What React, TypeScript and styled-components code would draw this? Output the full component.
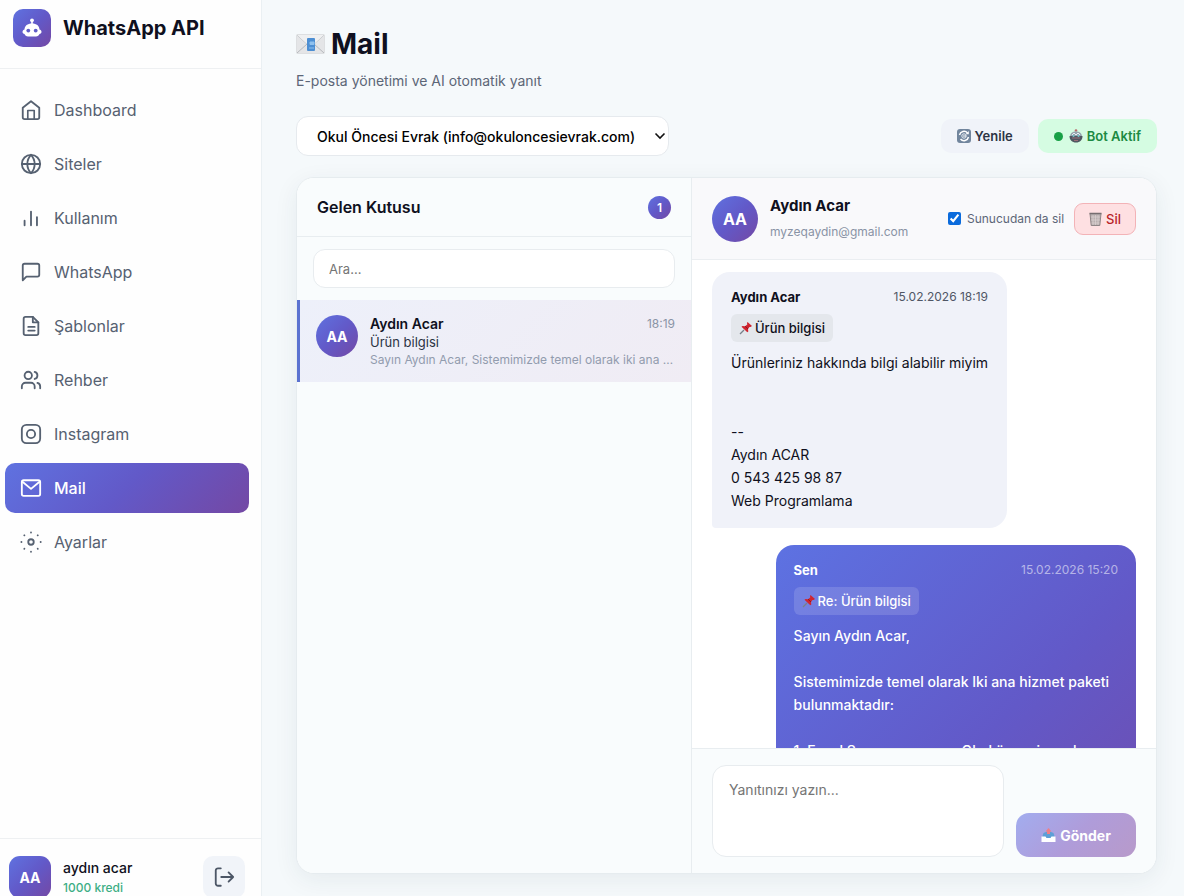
import React from "react";
import styled, { createGlobalStyle, css } from "styled-components";
import { Globe, Users } from "lucide-react";

const brand = "linear-gradient(135deg, #5f72e0 0%, #6259c8 50%, #7448a4 100%)";

const Global = createGlobalStyle`
  *, *::before, *::after { box-sizing: border-box; }
  body { margin: 0; font-family: Inter, "Liberation Sans", sans-serif; font-size: 14px; color: #0f1020; }
  button, input, textarea, select { font: inherit; color: inherit; }
  h1, h2, h3, p { margin: 0; }
`;

const Shell = styled.div`
  display: grid;
  grid-template-columns: 262px minmax(0, 1fr);
  height: 100vh;
  overflow: hidden;
  background: #f5f9fb;
`;

const Sidebar = styled.aside`
  display: flex;
  flex-direction: column;
  min-height: 0;
  background: #fefefe;
  border-right: 1px solid #eaf0f3;
`;

const Brand = styled.div`
  display: flex;
  align-items: center;
  gap: 12px;
  height: 69px;
  padding: 0 13px 12px;
  border-bottom: 1px solid #eef0f2;
  font-size: 20px;
  font-weight: 700;
`;

const Logo = styled.span`
  display: grid;
  place-items: center;
  width: 38px;
  height: 38px;
  border-radius: 10px;
  background: ${brand};
`;

const Nav = styled.nav`
  flex: 1;
  display: flex;
  flex-direction: column;
  gap: 4px;
  padding: 16px 12px 0 5px;
`;

const NavLink = styled.a<{ $active?: boolean }>`
  display: flex;
  align-items: center;
  gap: 12px;
  height: 50px;
  padding: 0 15px;
  border-radius: 10px;
  font-size: 16px;
  text-decoration: none;
  color: #566171;
  ${(p) => p.$active && css`
    color: #fff;
    font-weight: 500;
    background: ${brand};
  `}
`;

const Account = styled.div`
  display: flex;
  align-items: flex-start;
  gap: 12px;
  height: 58px;
  padding: 17px 16px 0 9px;
  border-top: 1px solid #eef0f2;
`;

const Avatar = styled.span<{ $size: number; $square?: boolean }>`
  flex: none;
  display: grid;
  place-items: center;
  width: ${(p) => p.$size}px;
  height: ${(p) => p.$size}px;
  border-radius: ${(p) => (p.$square ? "11px" : "50%")};
  background: ${brand};
  color: #fff;
  font-size: ${(p) => (p.$size > 42 ? "16px" : "14px")};
  font-weight: 700;
`;

const AccountText = styled.div`
  flex: 1;
  display: flex;
  flex-direction: column;
  gap: 2px;
  padding-top: 3px;
  line-height: 18px;
  font-size: 14px;
  font-weight: 500;
`;

const Credit = styled.span`
  font-size: 12px;
  color: #3dae85;
`;

const Logout = styled.button`
  display: grid;
  place-items: center;
  width: 42px;
  height: 42px;
  padding: 0;
  border: 0;
  border-radius: 10px;
  background: #f1f4f9;
  color: #4c5666;
`;

const Main = styled.main`
  display: flex;
  flex-direction: column;
  min-width: 0;
  min-height: 0;
  padding: 26px 27px 22px 34px;
`;

const Title = styled.h1`
  display: flex;
  align-items: center;
  gap: 6px;
  font-size: 28px;
  line-height: 36px;
  font-weight: 700;
`;

const Subtitle = styled.p`
  margin-top: 9px;
  line-height: 20px;
  font-size: 14px;
  color: #5c6677;
`;

const Toolbar = styled.div`
  display: flex;
  align-items: center;
  gap: 9px;
  margin: 25px 0 21px;
`;

const SelectBox = styled.div`
  position: relative;
  margin-right: auto;
  svg { position: absolute; right: 3px; top: 15px; pointer-events: none; }
`;

const AccountSelect = styled.select`
  appearance: none;
  width: 373px;
  height: 40px;
  padding: 0 32px 0 20px;
  border: 1px solid #e6eaee;
  border-radius: 12px;
  background: #fff;
  font-size: 14px;
  font-weight: 500;
  color: #000;
`;

const ToolButton = styled.button<{ $on?: boolean }>`
  display: flex;
  align-items: center;
  gap: 4px;
  height: 34px;
  padding: 0 16px;
  border: 0;
  border-radius: 10px;
  background: ${(p) => (p.$on ? "#d5fce2" : "#f0f3f9")};
  color: ${(p) => (p.$on ? "#1c8a43" : "#2c3444")};
  font-size: 13px;
  font-weight: 600;
`;

const Dot = styled.span`
  width: 9px;
  height: 9px;
  margin-right: 2px;
  border-radius: 50%;
  background: #18a046;
`;

const Card = styled.section`
  flex: 1;
  display: grid;
  grid-template-columns: 395px minmax(0, 1fr);
  min-height: 0;
  overflow: hidden;
  border: 1px solid #e6ecef;
  border-radius: 18px;
  background: #fff;
  box-shadow: 0 6px 24px rgba(30, 50, 70, 0.07);
`;

const Inbox = styled.div`
  display: flex;
  flex-direction: column;
  background: #f9fcfd;
  border-right: 1px solid #e8edf0;
`;

const InboxHead = styled.header`
  display: flex;
  align-items: center;
  justify-content: space-between;
  height: 59px;
  padding: 0 20px;
  border-bottom: 1px solid #e8edf0;
  h2 { font-size: 16px; font-weight: 600; }
`;

const Count = styled.span`
  display: grid;
  place-items: center;
  width: 23px;
  height: 23px;
  border-radius: 50%;
  background: ${brand};
  color: #fff;
  font-size: 12px;
  font-weight: 600;
`;

const Search = styled.input`
  height: 39px;
  margin: 12px 16px;
  padding: 0 15px;
  border: 1px solid #e8ecef;
  border-radius: 12px;
  background: #fff;
  font-size: 13px;
  &::placeholder { color: #757575; opacity: 1; }
`;

const Thread = styled.a`
  display: flex;
  gap: 12px;
  height: 82px;
  padding: 15px 16px 0;
  border-left: 3px solid #5b72d0;
  background: linear-gradient(135deg, #edf0fa, #f0ecf4);
  color: inherit;
  text-decoration: none;
`;

const ThreadText = styled.div`
  flex: 1;
  min-width: 0;
  line-height: 18px;
  font-size: 13px;
  color: #2c3444;
`;

const ThreadTop = styled.div`
  display: flex;
  justify-content: space-between;
  strong { font-size: 14px; font-weight: 600; color: #0f1020; }
  time { font-size: 12px; color: #8a94a6; }
`;

const Preview = styled.p`
  overflow: hidden;
  white-space: nowrap;
  text-overflow: ellipsis;
  font-size: 12px;
  color: #929cae;
`;

const Conversation = styled.div`
  display: flex;
  flex-direction: column;
  min-width: 0;
  min-height: 0;
`;

const ConvHead = styled.header`
  flex: none;
  display: flex;
  align-items: center;
  gap: 12px;
  height: 82px;
  padding: 0 20px;
  border-bottom: 1px solid #ebeef1;
  background: #f9f9fb;
`;

const Person = styled.div`
  flex: 1;
  padding-bottom: 2px;
  h2 { font-size: 15px; line-height: 22px; font-weight: 700; }
  p { margin-top: 6px; font-size: 12px; line-height: 18px; color: #8993a5; }
`;

const Check = styled.label`
  display: flex;
  align-items: center;
  gap: 6px;
  font-size: 12px;
  color: #5c6677;
  input { width: 13px; height: 13px; margin: 0; accent-color: #0b6bdc; }
`;

const DeleteButton = styled.button`
  display: flex;
  align-items: center;
  gap: 4px;
  height: 32px;
  margin-left: -2px;
  padding: 0 14px;
  border: 1px solid #f3b3b7;
  border-radius: 9px;
  background: #fee0e2;
  color: #b81f28;
  font-size: 13px;
  font-weight: 500;
`;

const Messages = styled.div`
  flex: 1;
  display: flex;
  flex-direction: column;
  align-items: flex-start;
  gap: 17px;
  min-height: 0;
  overflow: hidden;
  padding: 12px 20px 0;
`;

const Bubble = styled.article<{ $own?: boolean }>`
  flex: none;
  max-width: 85%;
  padding: 15px 19px 16px;
  border-radius: 18px 18px 18px 4px;
  background: #f0f2f9;
  font-size: 14px;
  ${(p) => p.$own && css`
    align-self: flex-end;
    min-height: 440px;
    padding: 15px 18px 16px;
    border-radius: 18px 18px 4px 18px;
    background: linear-gradient(135deg, #5d72e2 0%, #6259c8 50%, #7448a4 100%);
    color: #fff;
    font-weight: 500;
  `}
`;

const BubbleTop = styled.div<{ $own?: boolean }>`
  display: flex;
  align-items: center;
  justify-content: space-between;
  line-height: 20px;
  strong { font-size: 13px; font-weight: 700; }
  time { font-size: 12px; font-weight: 400; color: ${(p) => (p.$own ? "rgba(255,255,255,.55)" : "#4f5665")}; }
`;

const Subject = styled.span<{ $own?: boolean }>`
  display: inline-flex;
  align-items: center;
  gap: 2px;
  height: 28px;
  margin: 7px 0 9px;
  padding: 0 8px;
  border-radius: 6px;
  background: ${(p) => (p.$own ? "rgba(255,255,255,.14)" : "#e4e7ec")};
  font-size: 13px;
  font-weight: 500;
`;

const Body = styled.p`
  white-space: pre-wrap;
  line-height: 23px;
`;

const Composer = styled.form`
  flex: none;
  display: flex;
  align-items: flex-end;
  gap: 12px;
  padding: 16px 20px;
  border-top: 1px solid #e8edf0;
  background: #f9fcfd;
`;

const Reply = styled.textarea`
  flex: 1;
  min-width: 0;
  height: 92px;
  padding: 15px 16px;
  border: 1px solid #e8ecef;
  border-radius: 14px;
  background: #fff;
  font-size: 14px;
  resize: none;
  &::placeholder { color: #757575; opacity: 1; }
`;

const Send = styled.button`
  display: flex;
  align-items: center;
  justify-content: center;
  gap: 4px;
  width: 120px;
  height: 44px;
  border: 0;
  border-radius: 13px;
  background: linear-gradient(135deg, #a2adef, #af9cda 50%, #b89aca);
  color: #fff;
  font-size: 14px;
  font-weight: 700;
`;

const Robot = () => (
  <svg width="22" height="20" viewBox="0 0 22 20" aria-hidden="true">
    <circle cx="11" cy="2.3" r="1.9" fill="#fff" />
    <path d="M10.2 3h1.6v4h-1.6z" fill="#fff" />
    <path d="M11 5.5c4.6 0 7.3 2.3 7.5 5.9 1 .2 2 1 2 2.300s-.8 2.100-2 2.300c-.6 1.500-1.700 2.500-3.500 2.500H7c-1.800 0-2.900-1-3.500-2.500-1.200-.2-2-1-2-2.300s1-2.100 2-2.300C3.700 7.800 6.400 5.500 11 5.500z" fill="#fff" />
    <circle cx="7.300" cy="12.600" r="1.900" fill="#5f5cc8" />
    <circle cx="14.700" cy="12.600" r="1.900" fill="#5f5cc8" />
  </svg>
);

const Line = ({ children, size = 22 }: { children: React.ReactNode; size?: number }) => (
  <svg width={size} height={size} viewBox="0 0 24 24" fill="none" stroke="currentColor" strokeWidth="2" strokeLinecap="round" strokeLinejoin="round" aria-hidden="true">{children}</svg>
);

const HomeIcon = () => (
  <Line><path d="M3 9.500 12 2.500l9 7V20a2 2 0 0 1-2 2H5a2 2 0 0 1-2-2z" /><path d="M8.500 22v-9.500h7V22" strokeWidth="1.800" /></Line>
);
const Bars = () => (
  <Line><path d="M5 20v-5M12 20V5M18.500 20v-9" /></Line>
);
const Chat = () => (
  <Line><path d="M21 15a2 2 0 0 1-2 2H7l-4 4V5a2 2 0 0 1 2-2h14a2 2 0 0 1 2 2z" /></Line>
);
const Doc = () => (
  <Line><path d="M14 2H6a2 2 0 0 0-2 2v16a2 2 0 0 0 2 2h12a2 2 0 0 0 2-2V8z" /><path d="M14 2v6h6M16 13H9M16 17H9" /></Line>
);
const Envelope = () => (
  <Line><rect x="2" y="3.500" width="20" height="17" rx="2" /><path d="M3 5.500l9 7.500 9-7.500" /></Line>
);
const Insta = () => (
  <Line><rect x="2" y="2" width="20" height="20" rx="5" /><circle cx="12" cy="12" r="4.500" /></Line>
);
const Gear = () => (
  <Line><circle cx="12" cy="12" r="3" /><path d="M12 1.500v.1M12 22.500v.1M1.500 12h.1M22.500 12h.1M4.700 4.700l.1.1M19.300 19.300l.1.1M4.700 19.400l.1-.1M19.300 4.800l.1-.1" /></Line>
);
const Exit = () => (
  <Line><path d="M8.500 2.500H5.500a2.500 2.500 0 0 0-2.500 2.500v14a2.500 2.500 0 0 0 2.500 2.500h3M9 12h13M17 7l5 5-5 5" /></Line>
);

const EnvelopeArt = () => (
  <svg width="29" height="20" viewBox="0 0 29 20" aria-hidden="true">
    <rect x=".5" y=".5" width="28" height="19" rx="1" fill="#e4e5e7" stroke="#dddfe1" />
    <path d="M1 1l10 9L1 19M28 1L18 10l10 9" fill="none" stroke="#b6b9bd" />
    <path d="M1 1h27L18 10h-7z" fill="#eff0f1" />
    <rect x="11" y="4" width="8" height="13" rx="1" fill="#4d8fd3" />
    <path d="M14 8h4v2.500h-4zM13 14h5" fill="#8fc1ee" stroke="#8fc1ee" />
  </svg>
);
const RefreshArt = () => (
  <svg width="14" height="14" viewBox="0 0 14 14" aria-hidden="true">
    <rect width="14" height="14" rx="3" fill="#71859d" />
    <path d="M2.500 6A4.600 4.600 0 0 1 10.500 4M11.500 8A4.600 4.600 0 0 1 3.500 10" fill="none" stroke="#fff" strokeWidth="1.500" />
    <path d="M11.800 2v3.200H8.600z" fill="#fff" />
    <circle cx="7" cy="7" r="2.200" fill="none" stroke="#e7edf3" />
    <path d="M6 7h3" stroke="#fff" />
  </svg>
);
const BotArt = () => (
  <svg width="14" height="14" viewBox="0 0 14 14" aria-hidden="true">
    <circle cx="7" cy="1.500" r="1.300" fill="#b9696b" />
    <path d="M1 8c0-4 2.500-5.500 6-5.500S13 4 13 8z" fill="#97a4ad" />
    <path d="M3 6l2-2 2 2 2-2 2 2" fill="none" stroke="#e4eef2" />
    <path d="M.5 7h13c0 4-2.500 6.500-6.500 6.500S.5 11 .5 7z" fill="#505761" />
    <path d="M3 9h8M5 11.500h4" stroke="#9b6c78" />
    <circle cx="4.500" cy="7" r="1" fill="#70c4cb" /><circle cx="9.500" cy="7" r="1" fill="#70c4cb" />
  </svg>
);
const TrashArt = () => (
  <svg width="13" height="14" viewBox="0 0 13 14" aria-hidden="true">
    <path d="M1 1.500h11l-1.200 12H2.200z" fill="#b9b0b0" stroke="#8e8586" />
    <path d="M4 3v10M6.500 3v10M9 3v10M2 5h9M2 8h9M2.500 11h8" stroke="#ddd3d3" strokeWidth=".7" />
    <path d="M.5 1.500h12" stroke="#766e70" strokeWidth="1.500" />
  </svg>
);
const PinArt = () => (
  <svg width="14" height="14" viewBox="0 0 14 14" aria-hidden="true">
    <path d="M5 9l-4 4" stroke="#77808a" strokeWidth="1.200" />
    <path d="M8.500 1l4.500 4-1.500 1-1 0-1.500 2 .3 2.500-1 .8L2.500 5.800l1-.8 2.500.2L8.300 3.500 8 2z" fill="#d0242f" />
    <path d="M6 5.200l3 2.800" stroke="#8f1520" />
  </svg>
);
const TrayArt = () => (
  <svg width="15" height="15" viewBox="0 0 15 15" aria-hidden="true">
    <path d="M2.500 5L7.500 3l5 2 1.500 5H1z" fill="#5e9fd6" />
    <path d="M7.500 0l3 3.500H9V6H6V3.500H4.500z" fill="#ee7f86" />
    <path d="M.5 8.500h4l1 1.500h4l1-1.500h4V14H.5z" fill="#fff" />
  </svg>
);

const items = [
  { label: "Dashboard", icon: <HomeIcon /> },
  { label: "Siteler", icon: <Globe size={22} /> },
  { label: "Kullanım", icon: <Bars /> },
  { label: "WhatsApp", icon: <Chat /> },
  { label: "Şablonlar", icon: <Doc /> },
  { label: "Rehber", icon: <Users size={22} /> },
  { label: "Instagram", icon: <Insta /> },
  { label: "Mail", icon: <Envelope />, active: true },
  { label: "Ayarlar", icon: <Gear /> },
];

const messages = [
  {
    from: "Aydın Acar",
    at: "15.02.2026 18:19",
    subject: "Ürün bilgisi",
    body: "Ürünleriniz hakkında bilgi alabilir miyim\n\n\n--\nAydın ACAR\n0 543 425 98 87\nWeb Programlama",
  },
  {
    from: "Sen",
    at: "15.02.2026 15:20",
    subject: "Re: Ürün bilgisi",
    own: true,
    body: "Sayın Aydın Acar,\n\nSistemimizde temel olarak Iki ana hizmet paketi bulunmaktadır:\n\n1. Excel Sunumu ve arası Okul öncesi evrak",
  },
];

export default function App() {
  return (
    <>
      <Global />
      <Shell>
        <Sidebar>
          <Brand><Logo><Robot /></Logo>WhatsApp API</Brand>
          <Nav>
            {items.map((i) => (
              <NavLink key={i.label} href="#" $active={i.active}>{i.icon}{i.label}</NavLink>
            ))}
          </Nav>
          <Account>
            <Avatar $size={42} $square>AA</Avatar>
            <AccountText><span>aydın acar</span><Credit>1000 kredi</Credit></AccountText>
            <Logout aria-label="Çıkış"><Exit /></Logout>
          </Account>
        </Sidebar>
        <Main>
          <Title><EnvelopeArt />Mail</Title>
          <Subtitle>E-posta yönetimi ve AI otomatik yanıt</Subtitle>
          <Toolbar>
            <SelectBox>
              <AccountSelect aria-label="Hesap">
                <option>Okul Öncesi Evrak (info@okuloncesievrak.com)</option>
              </AccountSelect>
              <svg width="12" height="10" viewBox="0 0 12 10" fill="none" stroke="#111" strokeWidth="1.600" aria-hidden="true"><path d="M1.500 2.500 6 7l4.500-4.500" /></svg>
            </SelectBox>
            <ToolButton><RefreshArt />Yenile</ToolButton>
            <ToolButton $on><Dot /><BotArt />Bot Aktif</ToolButton>
          </Toolbar>
          <Card>
            <Inbox>
              <InboxHead><h2>Gelen Kutusu</h2><Count>1</Count></InboxHead>
              <Search type="text" placeholder="Ara..." aria-label="Ara" />
              <Thread href="#">
                <Avatar $size={42}>AA</Avatar>
                <ThreadText>
                  <ThreadTop><strong>Aydın Acar</strong><time>18:19</time></ThreadTop>
                  <p>Ürün bilgisi</p>
                  <Preview>Sayın Aydın Acar, Sistemimizde temel olarak iki ana hizmet paketi</Preview>
                </ThreadText>
              </Thread>
            </Inbox>
            <Conversation>
              <ConvHead>
                <Avatar $size={46}>AA</Avatar>
                <Person><h2>Aydın Acar</h2><p>myzeqaydin@gmail.com</p></Person>
                <Check><input type="checkbox" defaultChecked />Sunucudan da sil</Check>
                <DeleteButton><TrashArt />Sil</DeleteButton>
              </ConvHead>
              <Messages>
                {messages.map((m) => (
                  <Bubble key={m.at} $own={m.own}>
                    <BubbleTop $own={m.own}><strong>{m.from}</strong><time>{m.at}</time></BubbleTop>
                    <Subject $own={m.own}><PinArt />{m.subject}</Subject>
                    <Body>{m.body}</Body>
                  </Bubble>
                ))}
              </Messages>
              <Composer>
                <Reply placeholder="Yanıtınızı yazın..." aria-label="Yanıt" />
                <Send type="button"><TrayArt />Gönder</Send>
              </Composer>
            </Conversation>
          </Card>
        </Main>
      </Shell>
    </>
  );
}
